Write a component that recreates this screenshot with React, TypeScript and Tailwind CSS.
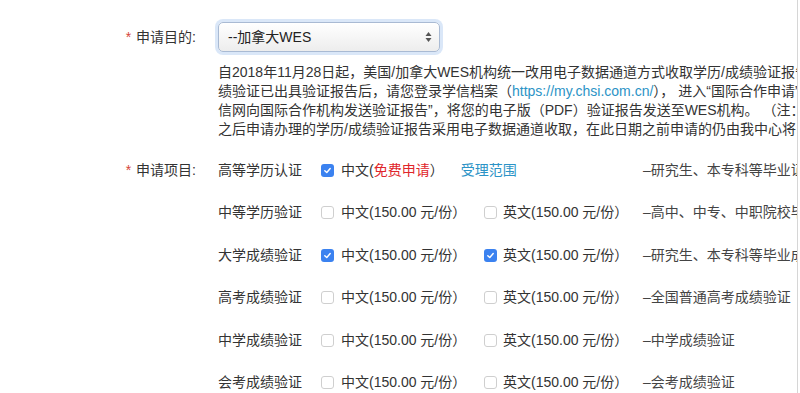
import React from "react";

const font = "font-['Liberation_Sans','Noto_Sans_CJK_SC',sans-serif]";

const Check = ({ on }: { on?: boolean }) =>
  on ? (
    <span className="w-[13px] h-[13px] rounded-[3px] bg-[#3b82f0] flex items-center justify-center shrink-0">
      <svg width="9" height="9" viewBox="0 0 10 10">
        <path d="M2 5.2 L4.2 7.3 L8 2.8" fill="none" stroke="white" strokeWidth="1.6" strokeLinecap="round" strokeLinejoin="round" />
      </svg>
    </span>
  ) : (
    <span className="w-[13px] h-[13px] rounded-[3px] border border-[#cfcfcf] bg-white shrink-0" />
  );

type Item = {
  name: string;
  zh: boolean;
  en: boolean | null;
  desc: string;
};

const items: Item[] = [
  { name: "高等学历认证", zh: true, en: null, desc: "–研究生、本专科等毕业证书认证" },
  { name: "中等学历验证", zh: false, en: false, desc: "–高中、中专、中职院校毕业证书验证" },
  { name: "大学成绩验证", zh: true, en: true, desc: "–研究生、本专科等毕业成绩验证" },
  { name: "高考成绩验证", zh: false, en: false, desc: "–全国普通高考成绩验证" },
  { name: "中学成绩验证", zh: false, en: false, desc: "–中学成绩验证" },
  { name: "会考成绩验证", zh: false, en: false, desc: "–会考成绩验证" },
];

const App = () => {
  return (
    <div className={`w-[800px] h-[393px] bg-white overflow-hidden text-[14px] text-[#333] ${font}`}>
      <div className="w-[798px] h-full border-r border-[#d6d6d6] overflow-hidden">
        {/* 申请目的 */}
        <div className="flex items-center mt-[22px] h-[30px]">
          <div className="w-[218px] shrink-0 text-right pr-[22px]">
            <span className="text-[#d5453a] mr-[5px]">*</span>申请目的:
          </div>
          <div className="w-[222px] h-[30px] rounded-[5px] border border-[#a9bad3] bg-gradient-to-b from-white to-[#ededed] shadow-[0_0_0_3px_rgba(150,185,235,0.35)] flex items-center justify-between pl-[9px] pr-[7px]">
            <span className="text-[#222]">--加拿大WES</span>
            <svg width="7" height="12" viewBox="0 0 7 12">
              <path d="M3.5 1 L6.5 5 L0.5 5 Z" fill="#555" />
              <path d="M3.5 11 L6.5 7 L0.5 7 Z" fill="#555" />
            </svg>
          </div>
        </div>

        {/* 说明 */}
        <div className="ml-[218px] mt-[11px] leading-[19px] whitespace-nowrap">
          <div>自2018年11月28日起，美国/加拿大WES机构统一改用电子数据通道方式收取学历/成绩验证报告。</div>
          <div>
            绩验证已出具验证报告后，请您登录学信档案（
            <span className="text-[#2b93c6]">https://my.chsi.com.cn/</span>
            ）， 进入“国际合作申请”
          </div>
          <div>信网向国际合作机构发送验证报告”，将您的电子版（PDF）验证报告发送至WES机构。 （注：</div>
          <div>之后申请办理的学历/成绩验证报告采用电子数据通道收取，在此日期之前申请的仍由我中心将</div>
        </div>

        {/* 申请项目 */}
        <div className="mt-[10px]">
          {items.map((it, i) => (
            <div key={it.name} className="flex items-center h-[42.5px] whitespace-nowrap">
              <div className="w-[218px] shrink-0 text-right pr-[22px]">
                {i === 0 && (
                  <>
                    <span className="text-[#d5453a] mr-[5px]">*</span>申请项目:
                  </>
                )}
              </div>
              <div className="w-[103px] shrink-0">{it.name}</div>
              <div className="w-[163px] shrink-0 flex items-center gap-[7px]">
                <Check on={it.zh} />
                {it.en === null ? (
                  <span>
                    中文(<span className="text-[#e0262b]">免费申请</span>）
                  </span>
                ) : (
                  <span>中文(150.00 元/份）</span>
                )}
                {it.en === null && <span className="ml-[10px] text-[#2b93c6]">受理范围</span>}
              </div>
              <div className="w-[159px] shrink-0 flex items-center gap-[6px]">
                {it.en !== null && (
                  <>
                    <Check on={it.en} />
                    <span>英文(150.00 元/份）</span>
                  </>
                )}
              </div>
              <div className="text-[#444]">{it.desc}</div>
            </div>
          ))}
        </div>
      </div>
    </div>
  );
};

export default App;
